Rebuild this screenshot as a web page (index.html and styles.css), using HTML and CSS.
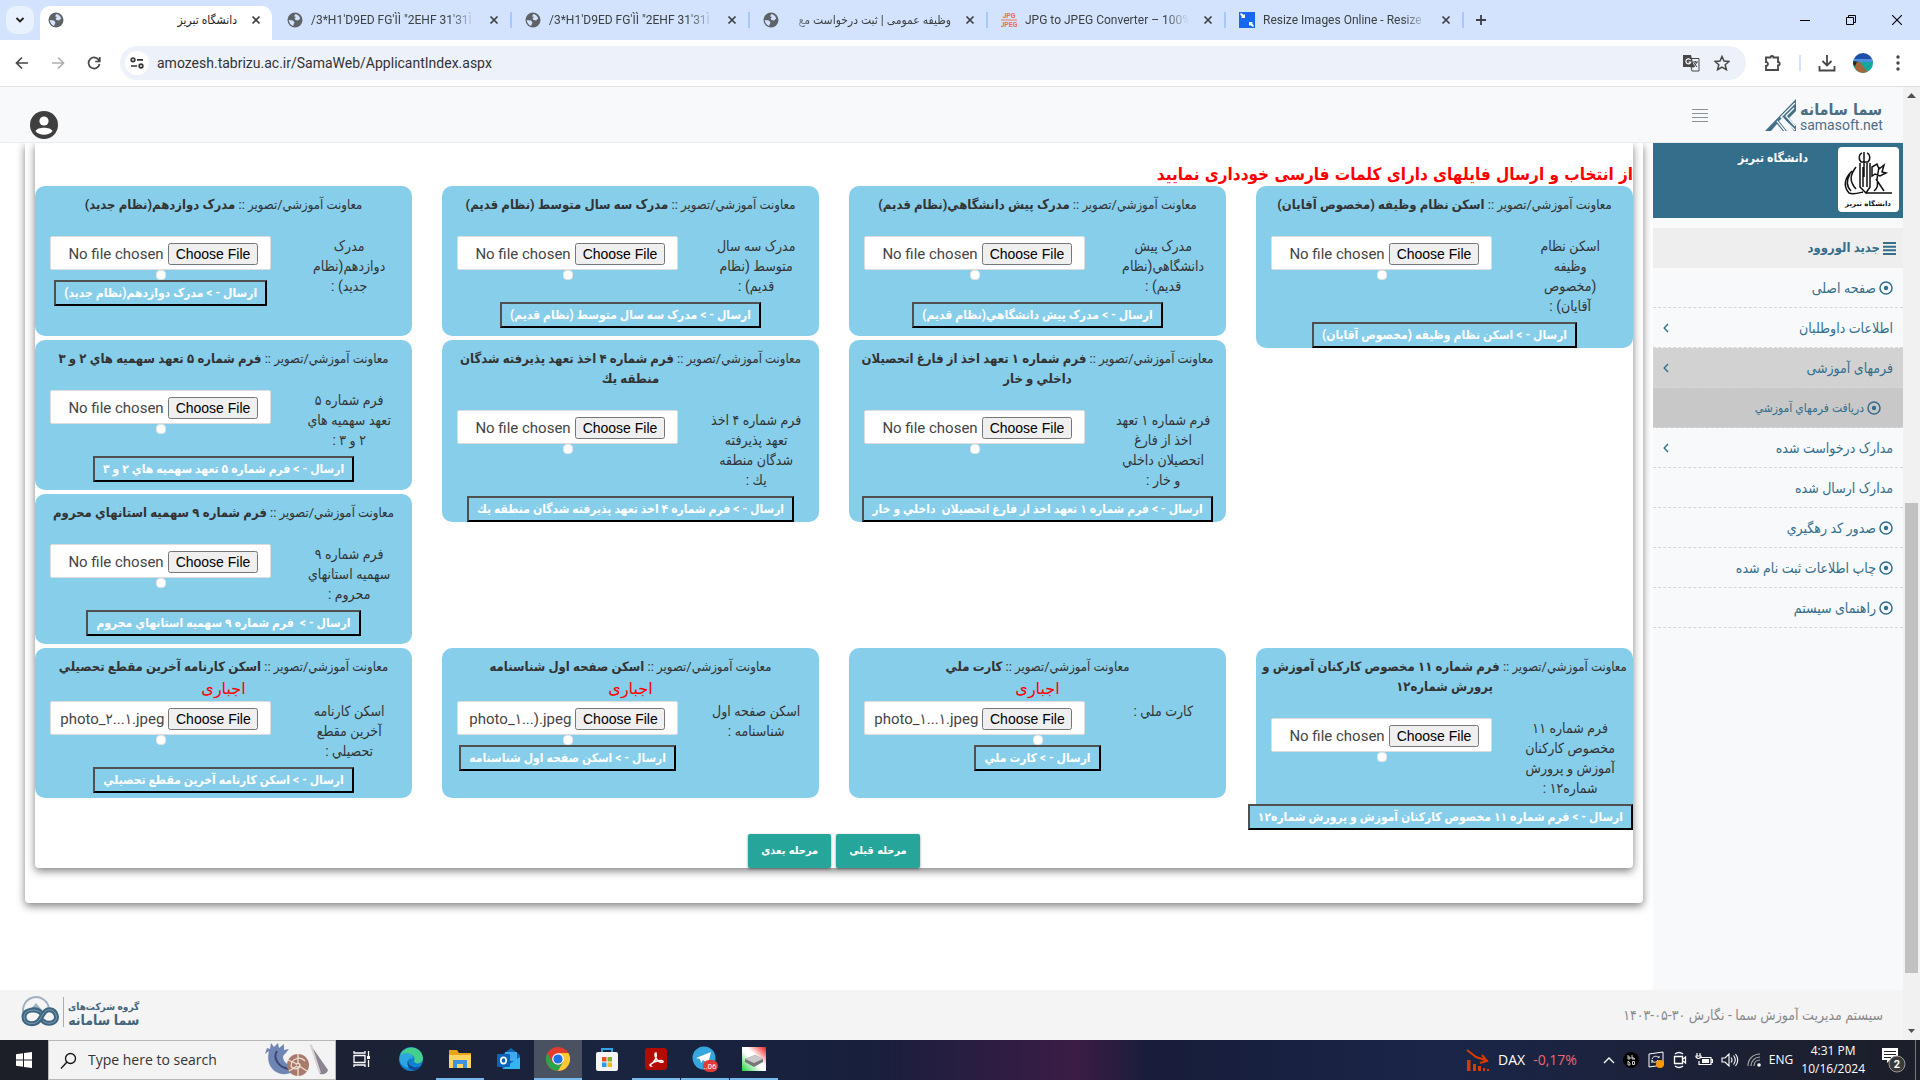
FILE: index.html
```html
<!DOCTYPE html>
<html lang="fa">
<head>
<meta charset="utf-8">
<title>دانشگاه تبریز</title>
<link rel="stylesheet" href="styles.css">
</head>
<body>
<svg width="0" height="0" class="sprite" aria-hidden="true">
  <symbol id="globe" viewBox="0 0 16 16"><circle cx="8" cy="8" r="7.500" fill="#5f6368"/><path d="M8.500 2c2 .6 4 2 4.700 4.500l-2.200 2-2.500-.5-1-1.500 1.500-1.500-2-.8zM1.800 8l4.200.5 1.500 2-1.500 3.500C3.500 13 2 11 1.800 8z" fill="#d3e3fd"/></symbol>
  <symbol id="x" viewBox="0 0 10 10"><path d="M1.500 1.500l7 7M8.500 1.500l-7 7" stroke="#3c4043" stroke-width="1.700"/></symbol>
  <symbol id="dot" viewBox="0 0 14 14"><circle cx="7" cy="7" r="6" fill="none" stroke="#336e8b" stroke-width="1.500"/><circle cx="7" cy="7" r="2.200" fill="#336e8b"/></symbol>
  <symbol id="chev" viewBox="0 0 6 10"><path d="M5 1L1.200 5 5 9" fill="none" stroke="#336e8b" stroke-width="1.400"/></symbol>
</svg>

<header class="tabs">
  <button class="tab-search" aria-label="Search tabs"><svg width="10" height="8" viewBox="0 0 10 8"><path d="M1.500 2L5 5.500 8.500 2" fill="none" stroke="#1f1f1f" stroke-width="1.800"/></svg></button>
  <div class="tab active"><svg class="fav"><use href="#globe"/></svg><span class="tab-text" dir="rtl">دانشگاه تبریز</span><svg class="close"><use href="#x"/></svg></div>
  <div class="tab"><svg class="fav"><use href="#globe"/></svg><span class="tab-text fade">/3*H1'D9ED FG'ÌÌ "2EHF 31'31Ì 3</span><svg class="close"><use href="#x"/></svg></div>
  <div class="tab"><svg class="fav"><use href="#globe"/></svg><span class="tab-text fade">/3*H1'D9ED FG'ÌÌ "2EHF 31'31Ì 3</span><svg class="close"><use href="#x"/></svg></div>
  <div class="tab"><svg class="fav"><use href="#globe"/></svg><span class="tab-text fade fade-rtl" dir="rtl">وظیفه عمومی | ثبت درخواست مع</span><svg class="close"><use href="#x"/></svg></div>
  <div class="tab"><svg class="fav" viewBox="0 0 16 16"><path d="M0 8h16" stroke="#ee7755"/><text x="8" y="6" class="jpg">JPG</text><text x="8" y="15" class="jpg">JPEG</text></svg><span class="tab-text fade">JPG to JPEG Converter – 100% F</span><svg class="close"><use href="#x"/></svg></div>
  <div class="tab"><svg class="fav" viewBox="0 0 16 16"><rect width="16" height="16" fill="#1668f0"/><path d="M6 6V2L5 3 2 1 1 2l2 3-1 1zM10 10v4l1-1 3 2 1-1-2-3 1-1z" fill="#fff"/></svg><span class="tab-text fade">Resize Images Online - Resize JP</span><svg class="close"><use href="#x"/></svg></div>
  <button class="plain new-tab" aria-label="New tab"><svg width="12" height="12" viewBox="0 0 12 12"><path d="M6 1v10M1 6h10" stroke="#3c4043" stroke-width="1.800"/></svg></button>
  <div class="window-controls">
    <button class="plain" aria-label="Minimize"><svg width="10" height="10"><path d="M0 5.500h10" stroke="#000"/></svg></button>
    <button class="plain" aria-label="Restore"><svg width="10" height="10"><path d="M.5 2.500h7v7h-7zM2.500 2.500v-2h7v7h-2" fill="none" stroke="#000"/></svg></button>
    <button class="plain" aria-label="Close"><svg width="10" height="10"><path d="M0 0l10 10M10 0L0 10" stroke="#000" stroke-width="1.100"/></svg></button>
  </div>
</header>

<nav class="toolbar">
  <button class="plain nav" aria-label="Back"><svg width="14" height="14" viewBox="0 0 14 14"><path d="M7 1.500L1.500 7 7 12.500M1.500 7H13" fill="none" stroke="#474747" stroke-width="1.700"/></svg></button>
  <button class="plain nav" aria-label="Forward"><svg width="14" height="14" viewBox="0 0 14 14"><path d="M7 1.500L12.500 7 7 12.500M12.500 7H1" fill="none" stroke="#b0b0b0" stroke-width="1.700"/></svg></button>
  <button class="plain nav" aria-label="Reload"><svg width="14" height="14" viewBox="0 0 14 14"><path d="M12 4.500A5.500 5.500 0 1 0 12.500 8M12.800 1v4.500H8.300" fill="none" stroke="#474747" stroke-width="1.700"/></svg></button>
  <div class="omnibox">
    <span class="tune"><svg width="14" height="12" viewBox="0 0 14 12"><g fill="none" stroke="#333" stroke-width="1.700"><circle cx="3" cy="2.800" r="1.800"/><path d="M7 2.800h6M1 9h6"/><circle cx="11" cy="9" r="1.800"/></g></svg></span>
    <input class="url" type="text" aria-label="Address" value="amozesh.tabrizu.ac.ir/SamaWeb/ApplicantIndex.aspx">
    <svg width="18" height="18" viewBox="0 0 18 18"><path d="M1 1h8l3 12H1z" fill="#474747"/><path d="M8.500 4.500h8.500v12.500H10l-1-4h3zM11 8h5M13.500 7v1.500M12 13l3-5M12 9l3 4" fill="none" stroke="#474747"/><path d="M8.500 6A2.500 2.500 0 1 0 8.800 8H6.500" fill="none" stroke="#fff" stroke-width="1.200"/></svg>
    <svg class="star" width="16" height="16" viewBox="0 0 16 16"><path d="M8 1.500l2 4.600 5 .4-3.800 3.300 1.200 4.900L8 12.100l-4.400 2.600 1.200-4.900L1 6.500l5-.4z" fill="none" stroke="#474747" stroke-width="1.500"/></svg>
  </div>
  <div class="tools">
    <svg width="18" height="18" viewBox="0 0 18 18"><path d="M2 3.500h4.500a1.500 1.500 0 0 1 3 0H14v4.500a1.700 1.700 0 0 1 0 3.400V16H2v-4a2 2 0 0 0 0-4z" fill="none" stroke="#474747" stroke-width="1.800"/></svg>
    <span class="tool-sep"></span>
    <svg width="18" height="18" viewBox="0 0 18 18"><path d="M9 1v10M4.500 7L9 11.500 13.500 7M1.500 12v4.500h15V12" fill="none" stroke="#474747" stroke-width="1.800"/></svg>
    <svg width="20" height="20" viewBox="0 0 20 20"><defs><clipPath id="av"><circle cx="10" cy="10" r="10"/></clipPath></defs><g clip-path="url(#av)"><path fill="#1d4fa8" d="M0 0h20v9H0z"/><path fill="#17a69c" d="M0 9h20v11H0z"/><path fill="#4c8ee0" d="M0 6h20v3H0z"/><path fill="#2c2a22" d="M0 8l7 1-4 5-3-2z"/><path fill="#a3663c" d="M4 9l3 0 8 11H4L2 13z"/></g></svg>
    <svg width="4" height="16" viewBox="0 0 4 16" fill="#474747"><circle cx="2" cy="2" r="1.700"/><circle cx="2" cy="8" r="1.700"/><circle cx="2" cy="14" r="1.700"/></svg>
  </div>
</nav>

<div class="viewport">
<div class="page" dir="rtl">
  <header class="site-header">
    <a class="brand" href="#" dir="ltr">
      <svg width="32" height="32" viewBox="0 0 32 32"><path d="M31 0v12l-7 7 7 8v5h-2L18 18l-4 4 8 10h-4l-6-7-6 7H0z" fill="#43708a"/><path d="M30 4L16 18l14 13M29 9l-8 8 9 10M12 22l8 10" stroke="#f8f9fb" fill="none" stroke-width="1.300"/></svg>
      <span class="brand-text"><b>سما سامانه</b><span>samasoft.net</span></span>
    </a>
    <button class="plain menu" aria-label="منو"><svg width="16" height="14" viewBox="0 0 16 14"><path d="M0 .5h16M0 4.500h16M0 8.500h16M0 12.500h16" stroke="#8a919b"/></svg></button>
    <a class="user" href="#" aria-label="کاربر"><svg width="28" height="28" viewBox="0 0 28 28"><circle cx="14" cy="14" r="14" fill="#3f3f3f"/><circle cx="14" cy="10" r="4.600" fill="#fff"/><path d="M5.500 20c2-4.500 15-4.500 17 0-3.500 5-13.500 5-17 0z" fill="#fff"/></svg></a>
  </header>
  <div class="content">
    <aside class="sidebar">
      <div class="uni">
        <svg class="uni-logo" viewBox="0 0 61 65"><g fill="none" stroke="#111" stroke-width="1.500"><path d="M24 6c-3 1-4 6-1 9h7c3-3 2-8-1-9M26 5v25M22 16v24l6 6 4-6V16M25 20v20M29 16v24M14 24c-8 8-9 15-3 22 4 2 10 0 14-1M12 27c-4 7-4 12 1 17M18 20c-6 8-7 14 0 22M28 46h26M36 44c4-3 4-6 3-12l2-12M38 32l8 12M34 20l5-3 2 5 5-4-2 7 4 1-6 3-5-2-3 2z"/></g><text x="30" y="59" text-anchor="middle" class="logo-text">دانشگاه تبریز</text></svg>
        <b>دانشگاه تبریز</b>
      </div>
      <h2 class="side-title"><svg width="13" height="13" viewBox="0 0 13 13"><path d="M0 1h13M0 4.700h13M0 8.300h13M0 12h13" stroke="#336e8b" stroke-width="2"/></svg>جدید الوروود</h2>
      <nav class="side-nav">
        <a href="#"><svg class="dot-icon"><use href="#dot"/></svg>صفحه اصلی</a>
        <a href="#">اطلاعات داوطلبان<svg class="chev"><use href="#chev"/></svg></a>
        <a href="#" class="open">فرمهای آموزشی<svg class="chev"><use href="#chev"/></svg></a>
        <a href="#" class="sub"><svg class="dot-icon"><use href="#dot"/></svg>دريافت فرمهاي آموزشي</a>
        <a href="#">مدارک درخواست شده<svg class="chev"><use href="#chev"/></svg></a>
        <a href="#">مدارک ارسال شده</a>
        <a href="#"><svg class="dot-icon"><use href="#dot"/></svg>صدور کد رهگيري</a>
        <a href="#"><svg class="dot-icon"><use href="#dot"/></svg>چاپ اطلاعات ثبت نام شده</a>
        <a href="#"><svg class="dot-icon"><use href="#dot"/></svg>راهنمای سیستم</a>
      </nav>
    </aside>
    <main class="main">
      <div class="outer">
        <form class="inner">
          <p class="notice">از انتخاب و ارسال فایلهای دارای کلمات فارسی خودداری نمایید</p>
          <div class="cards">
            <section class="card c1 r1">
              <h3 class="card-title">معاونت آموزشي/تصوير :: <b>اسکن نظام وظيفه (مخصوص آقايان)</b></h3>
              <div class="card-body"><label for="f1">اسکن نظام<br>وظيفه<br>(مخصوص<br>آقايان) :</label><div class="field"><div class="file"><input type="file" id="f1"></div><i class="pip"></i></div></div>
              <button type="button" class="send">ارسال - &gt; اسکن نظام وظيفه (مخصوص آقايان)</button>
            </section>
            <section class="card c2 r1">
              <h3 class="card-title">معاونت آموزشي/تصوير :: <b>مدرک پيش دانشگاهي(نظام قديم)</b></h3>
              <div class="card-body"><label for="f2">مدرک پيش<br>دانشگاهي(نظام<br>قديم) :</label><div class="field"><div class="file"><input type="file" id="f2"></div><i class="pip"></i></div></div>
              <button type="button" class="send">ارسال - &gt; مدرک پيش دانشگاهي(نظام قديم)</button>
            </section>
            <section class="card c3 r1">
              <h3 class="card-title">معاونت آموزشي/تصوير :: <b>مدرک سه سال متوسط (نظام قديم)</b></h3>
              <div class="card-body"><label for="f3">مدرک سه سال<br>متوسط (نظام<br>قديم) :</label><div class="field"><div class="file"><input type="file" id="f3"></div><i class="pip"></i></div></div>
              <button type="button" class="send">ارسال - &gt; مدرک سه سال متوسط (نظام قديم)</button>
            </section>
            <section class="card c4 r1">
              <h3 class="card-title">معاونت آموزشي/تصوير :: <b>مدرک دوازدهم(نظام جديد)</b></h3>
              <div class="card-body"><label for="f4">مدرک<br>دوازدهم(نظام<br>جديد) :</label><div class="field"><div class="file"><input type="file" id="f4"></div><i class="pip"></i><button type="button" class="send">ارسال - &gt; مدرک دوازدهم(نظام جديد)</button></div></div>
            </section>
            <section class="card c2 r2">
              <h3 class="card-title">معاونت آموزشي/تصوير :: <b>فرم شماره ۱ تعهد اخذ از فارغ اتحصيلان<br>داخلي و خار</b></h3>
              <div class="card-body"><label for="f5">فرم شماره ۱ تعهد<br>اخذ از فارغ<br>اتحصيلان داخلي<br>و خار :</label><div class="field"><div class="file"><input type="file" id="f5"></div><i class="pip"></i></div></div>
              <button type="button" class="send">ارسال - &gt; فرم شماره ۱ تعهد اخذ از فارغ اتحصيلان&nbsp; داخلي و خار</button>
            </section>
            <section class="card c3 r2">
              <h3 class="card-title">معاونت آموزشي/تصوير :: <b>فرم شماره ۴ اخذ تعهد پذيرفته شدگان<br>منطقه يك</b></h3>
              <div class="card-body"><label for="f6">فرم شماره ۴ اخذ<br>تعهد پذيرفته<br>شدگان منطقه<br>يك :</label><div class="field"><div class="file"><input type="file" id="f6"></div><i class="pip"></i></div></div>
              <button type="button" class="send">ارسال - &gt; فرم شماره ۴ اخذ تعهد پذيرفته شدگان منطقه يك</button>
            </section>
            <section class="card c4 r2">
              <h3 class="card-title">معاونت آموزشي/تصوير :: <b>فرم شماره ۵ تعهد سهميه هاي ۲ و ۳</b></h3>
              <div class="card-body"><label for="f7">فرم شماره ۵<br>تعهد سهميه هاي<br>۲ و ۳ :</label><div class="field"><div class="file"><input type="file" id="f7"></div><i class="pip"></i></div></div>
              <button type="button" class="send">ارسال - &gt; فرم شماره ۵ تعهد سهميه هاي ۲ و ۳</button>
            </section>
            <section class="card c4 r3">
              <h3 class="card-title">معاونت آموزشي/تصوير :: <b>فرم شماره ۹ سهميه استانهاي محروم</b></h3>
              <div class="card-body"><label for="f8">فرم شماره ۹<br>سهميه استانهاي<br>محروم :</label><div class="field"><div class="file"><input type="file" id="f8"></div><i class="pip"></i></div></div>
              <button type="button" class="send">ارسال - &gt;&nbsp; فرم شماره ۹ سهميه استانهاي محروم</button>
            </section>
            <section class="card c1 r4">
              <h3 class="card-title">معاونت آموزشي/تصوير :: <b>فرم شماره ۱۱ مخصوص کارکنان آموزش و<br>پرورش شماره۱۲</b></h3>
              <div class="card-body"><label for="f9">فرم شماره ۱۱<br>مخصوص کارکنان<br>آموزش و پرورش<br>شماره۱۲ :</label><div class="field"><div class="file"><input type="file" id="f9"></div><i class="pip"></i></div></div>
              <button type="button" class="send wide">ارسال - &gt; فرم شماره ۱۱ مخصوص کارکنان آموزش و پرورش شماره۱۲</button>
            </section>
            <section class="card c2 r4 must">
              <h3 class="card-title">معاونت آموزشي/تصوير :: <b>کارت ملي</b></h3>
              <p class="required">اجباری</p>
              <div class="card-body"><label for="f10">کارت ملي :</label><div class="field"><div class="file chosen"><input type="file" id="f10"><span dir="ltr">photo_۱...۱.jpeg</span></div></div></div>
              <i class="pip"></i>
              <button type="button" class="send">ارسال - &gt; کارت ملي</button>
            </section>
            <section class="card c3 r4 must">
              <h3 class="card-title">معاونت آموزشي/تصوير :: <b>اسکن صفحه اول شناسنامه</b></h3>
              <p class="required">اجباری</p>
              <div class="card-body"><label for="f11">اسکن صفحه اول<br>شناسنامه :</label><div class="field"><div class="file chosen"><input type="file" id="f11"><span dir="ltr">photo_۱...).jpeg</span></div><i class="pip"></i><button type="button" class="send">ارسال - &gt; اسکن صفحه اول شناسنامه</button></div></div>
            </section>
            <section class="card c4 r4 must">
              <h3 class="card-title">معاونت آموزشي/تصوير :: <b>اسکن کارنامه آخرين مقطع تحصيلي</b></h3>
              <p class="required">اجباری</p>
              <div class="card-body"><label for="f12">اسکن کارنامه<br>آخرين مقطع<br>تحصيلي :</label><div class="field"><div class="file chosen"><input type="file" id="f12"><span dir="ltr">photo_۲...۱.jpeg</span></div><i class="pip"></i></div></div>
              <button type="button" class="send">ارسال - &gt; اسکن کارنامه آخرين مقطع تحصيلي</button>
            </section>
          </div>
          <div class="steps"><button type="button" class="step">مرحله قبلی</button><button type="button" class="step">مرحله بعدی</button></div>
        </form>
      </div>
    </main>
  </div>
  <footer class="site-footer">
    <span>سیستم مدیریت آموزش سما - نگارش ۳۰-۰۵-۱۴۰۳</span>
    <div class="group" dir="ltr">
      <svg width="40" height="32" viewBox="0 0 40 32"><path d="M5 21A13 13 0 1 1 29 13" fill="none" stroke="#9fb0bf" stroke-width="2"/><path d="M10 14l6-7 6 7z" fill="#9fb0bf"/><g fill="none" stroke-linecap="round"><path d="M21 17C17 12 4 13 4 21s12 9 16 2 6-10 11-9 7 8 4 11-9 3-12 0" stroke="#3d6580" stroke-width="5"/><path d="M21 17C17 12 4 13 4 21s12 9 16 2 6-10 11-9 7 8 4 11-9 3-12 0" stroke="#7f9db3"/></g></svg>
      <span class="group-text"><b class="small">گروه‌ شرکت‌های</b><b>سما سامانه</b></span>
    </div>
  </footer>
</div>
<div class="scrollbar" aria-hidden="true"><svg class="arrow" viewBox="0 0 17 17"><path d="M4 11l4.500-5 4.500 5z" fill="#505050"/></svg><i class="above"></i><i class="thumb"></i><i class="below"></i><svg class="arrow" viewBox="0 0 17 17"><path d="M5 6l3.500 4L12 6z" fill="#505050"/></svg></div>
</div>

<footer class="taskbar">
  <button class="plain start" aria-label="Start"><svg width="16" height="16" viewBox="0 0 16 16" fill="#fff"><path d="M0 2.200L7 1.200v6.300H0zM8 1l8-1v7.500H8zM0 8.500h7v6.300l-7-1zM8 8.500h8V16l-8-1z"/></svg></button>
  <label class="search"><svg width="17" height="17" viewBox="0 0 17 17"><circle cx="10.500" cy="6.500" r="5" fill="none" stroke="#111" stroke-width="1.300"/><path d="M7 10l-6 6.500" stroke="#111" stroke-width="1.300"/></svg><input type="text" placeholder="Type here to search" aria-label="Search"><svg width="66" height="36" viewBox="0 0 66 36"><path d="M27 31C12 36 1 24 5 9L1 12l2-6 3 1 1-6 3 4 4-4 1 5 5-4 0 6 5-1-4 5c-4 2-2 9 7 13z" fill="#6f86b5"/><path d="M13 9c-4 6 0 16 12 18" stroke="#3a4774" fill="none" stroke-width="2"/><circle cx="34" cy="23" r="11" fill="#a87a6c"/><path d="M34 23m-2 0a2 2 0 1 1 4 1 5 5 0 0 1-9 0 8 8 0 0 1 14-5M34 12v10M24 18l9 4M25 29l8-5M34 34v-10M43 29l-8-5" fill="none" stroke="#f1dfd3" stroke-width="1.300"/><path d="M46 2l18 26c-1 4-5 5-8 4z" fill="#8c8493"/><path d="M47 3l9 28" stroke="#d8cfd2" stroke-width="2"/></svg></label>
  <div class="apps">
    <button class="plain app" aria-label="Task view"><svg width="18" height="16" viewBox="0 0 18 16"><path d="M1 0v2h11V0M1 16v-2h11v2M1 4.500h11v7H1zM15.500 0v5M15.500 9v7" fill="none" stroke="#fff" stroke-width="1.300"/><path d="M14 5h3v3h-3z" fill="#fff"/></svg></button>
    <button class="plain app" aria-label="Edge"><svg width="24" height="24" viewBox="0 0 24 24"><circle cx="12" cy="12" r="12" fill="#1180d2"/><path d="M1 9C4-2 22-3 24 11c0 6-8 7-9 3 3-7-8-9-14-5z" fill="#45cf8d"/><path d="M1 9C6 3 15 7 14 12c-4-3-8 4-3 9C4 21-1 15 1 9z" fill="#2ba8e2"/><path d="M9 13c0 7 8 9 13 6-5 8-16 4-13-6z" fill="#0a4d9b"/></svg></button>
    <button class="plain app run" aria-label="Explorer"><svg width="24" height="20" viewBox="0 0 24 20"><path d="M1 1h8l2 3h12v15H1z" fill="#e9a21b"/><path d="M1 6h22v13H1z" fill="#fcd462"/><path d="M5 19v-8h14v8h-4v-4H9v4z" fill="#3d93de"/></svg></button>
    <button class="plain app" aria-label="Outlook"><svg width="24" height="24" viewBox="0 0 24 24"><path d="M5 8l9-7 9 7v13H5z" fill="#1267b5"/><path d="M8 5h12v9H8z" fill="#3faaf0"/><path d="M5 22l18-12v12z" fill="#32b6f2"/><rect y="7" width="13" height="13" rx="1" fill="#0a64b8"/><ellipse cx="6.500" cy="13.500" rx="2.700" ry="3.200" fill="none" stroke="#fff" stroke-width="1.700"/></svg></button>
    <button class="plain app run on" aria-label="Chrome"><svg width="24" height="24" viewBox="0 0 24 24"><circle cx="12" cy="12" r="12" fill="#e33b2e"/><path d="M1.600 6A12 12 0 0 0 12 24l5-9-5 3-6-3z" fill="#2ba24c"/><path d="M12 24A12 12 0 0 0 22.400 6H12l5 9z" fill="#fcc934"/><circle cx="12" cy="12" r="5.800" fill="#fff"/><circle cx="12" cy="12" r="4.600" fill="#1a73e8"/></svg></button>
    <button class="plain app" aria-label="Store"><svg width="24" height="24" viewBox="0 0 24 24"><path d="M7 6V2h10v4" fill="none" stroke="#2ea5e6" stroke-width="2"/><rect x="1" y="5" width="22" height="19" rx="2" fill="#f5f5f5"/><path fill="#e8502a" d="M7 10h4.500v4.500H7z"/><path fill="#7db52f" d="M12.500 10H17v4.500h-4.500z"/><path fill="#2b9fe0" d="M7 15.500h4.500V20H7z"/><path fill="#f5b61e" d="M12.500 15.500H17V20h-4.500z"/></svg></button>
    <button class="plain app run" aria-label="Acrobat"><svg width="24" height="24" viewBox="0 0 24 24"><rect x="1" y="1" width="22" height="22" rx="3" fill="#b30b00"/><path d="M6 18c6-4 7-8 6-12-3 0 1 11 7 9 1-3-9-1-12 2-1 1-1 2 0 2z" fill="none" stroke="#fff" stroke-width="1.500"/></svg></button>
    <button class="plain app run" aria-label="Telegram"><svg width="26" height="26" viewBox="0 0 26 26"><circle cx="12" cy="12" r="11.500" fill="#35a6de"/><path d="M4 12l15-6-3 12-5-4-2 3-1-4z" fill="#fff"/><rect x="11" y="14" width="15" height="12" rx="6" fill="#e53935"/><text x="18" y="23" class="badge">..06</text></svg></button>
    <button class="plain app run" aria-label="Scanner"><svg width="24" height="24" viewBox="0 0 24 24"><defs><linearGradient id="sg" x1="0" y1="1" x2="1" y2="0"><stop offset="0" stop-color="#1fd03c"/><stop offset=".45" stop-color="#fff"/><stop offset=".6" stop-color="#fff"/><stop offset="1" stop-color="#f01818"/></linearGradient></defs><path fill="url(#sg)" d="M0 0h24v24H0z"/><path d="M3 12l10-4 8 4v3l-9 5-9-5z" fill="#777"/><path d="M3 12l10-4 8 4-9 4z" fill="#c9c9c9"/></svg></button>
  </div>
  <div class="tray">
    <svg width="24" height="24" viewBox="0 0 24 24"><path d="M1 2l9 7 9 3M16 7l5 6-7 2" fill="none" stroke="#d83b01" stroke-width="2"/><path d="M1 12h3.500v11H1zM7 16h3v7H7zM12 18h3v5h-3zM17 20h2v3h-2zM21 21h2v2h-2z" fill="#d83b01"/></svg>
    <span class="dax">DAX</span><span class="down">-0,17%</span>
    <svg class="up" width="12" height="8" viewBox="0 0 12 8"><path d="M1 7l5-5 5 5" fill="none" stroke="#fff" stroke-width="1.400"/></svg>
    <svg width="16" height="16" viewBox="0 0 16 16"><circle cx="8" cy="8" r="8" fill="#000"/><path d="M5 3v4h2V5H5M9 3v4h3L9 5M5 9v4h2v-2zM9.500 9.500h2v3h-2z" fill="none" stroke="#ccc"/></svg>
    <svg width="18" height="18" viewBox="0 0 18 18"><path d="M2 3l14-2v13L2 16z" fill="none" stroke="#fff"/><path d="M5 8c2-4 5-3 7-1V5M11 9c-2 3-5 3-6 0v3" fill="none" stroke="#fff"/><circle cx="13" cy="13" r="4" fill="#ff9800"/></svg>
    <svg width="14" height="18" viewBox="0 0 14 18"><path d="M2 3q4-3 8 0M2 15q4 3 8 0M1.500 5.500h8v7h-8zM10 8l2.500-2v6L10 10" fill="none" stroke="#fff" stroke-width="1.300"/></svg>
    <svg width="18" height="14" viewBox="0 0 18 14"><path d="M5 4.500h11v7H4V8M16 6.500h1.500v3H16M2 0v3M5 0v3M1 3h5v1Q3.500 7 1 4z" fill="none" stroke="#fff" stroke-width="1.200"/><path d="M7 6h7v4H7z" fill="#fff"/></svg>
    <svg width="18" height="14" viewBox="0 0 18 14"><path d="M1 5h3l4-4v12L4 9H1zM10 4.500q2 2.500 0 5M12.500 2.500q3.500 4.500 0 9M14.500 1q4.500 6 0 12" fill="none" stroke="#fff" stroke-width="1.100"/></svg>
    <svg width="14" height="14" viewBox="0 0 14 14"><path d="M1 13C1 6 6 1 13 1M4 13c0-5 4-9 9-9M7 13c0-4 3-6 6-6" fill="none" stroke="#aaa" stroke-width="1.200"/><circle cx="12" cy="12" r="1.800" fill="#fff"/></svg>
    <span>ENG</span>
    <span class="clock">4:31 PM<br>10/16/2024</span>
    <svg width="26" height="26" viewBox="0 0 26 26"><path d="M1 1h16v12H9l-3 3v-3H1z" fill="#fff"/><path d="M3 4.500h12M3 7.500h12M3 10.500h7" stroke="#222"/><circle cx="16" cy="17" r="8" fill="#3a3a3a" stroke="#999"/><text x="16" y="21" class="count">2</text></svg>
    <i class="desk"></i>
  </div>
</footer>
</body>
</html>
```
FILE: styles.css
```css
* { box-sizing: border-box; }
body { margin: 0; min-height: 100vh; display: flex; flex-direction: column; font: 14px/20px Roboto, "DejaVu Sans Condensed", "DejaVu Sans", sans-serif; color: #333; background: #fff; }
h2, h3, p { margin: 0; font-weight: normal; }
a { color: inherit; text-decoration: none; }
svg { flex: none; display: block; }
.sprite { position: absolute; }
.plain { border: 0; padding: 0; background: none; display: flex; align-items: center; justify-content: center; }

/* browser tabs */
.tabs { display: flex; height: 40px; background: #d3e3fd; padding-top: 6px; font: 12px/18px Roboto, "DejaVu Sans Condensed", "DejaVu Sans", sans-serif; }
.tab-search { width: 28px; height: 28px; margin: 0 6px; padding: 0; border: 0; border-radius: 10px; background: #e9f1fe; display: flex; align-items: center; justify-content: center; }
.tab { position: relative; width: 238px; padding: 0 13px 6px; display: flex; align-items: center; gap: 8px; color: #3c4043; }
.tab.active { width: 232px; margin-right: 2px; background: #fff; border-radius: 10px 10px 0 0; padding: 0 11px 6px 8px; color: #1f1f1f; }
.tab:not(.active)::after { content: ""; position: absolute; right: 0; top: 6px; width: 2px; height: 16px; background: #a8c7fa; }
.fav { width: 16px; height: 16px; }
.close { width: 10px; height: 10px; margin-left: 6px; }
.tab-text { flex: 1; min-width: 0; white-space: nowrap; overflow: hidden; }
.fade { -webkit-mask-image: linear-gradient(to left, transparent, #000 24px); mask-image: linear-gradient(to left, transparent, #000 24px); }
.fade-rtl { -webkit-mask-image: linear-gradient(to right, transparent, #000 24px); mask-image: linear-gradient(to right, transparent, #000 24px); }
.jpg { font: bold 7px Roboto, sans-serif; fill: #ee6f4c; text-anchor: middle; }
.new-tab { width: 34px; padding-bottom: 6px; }
.window-controls { margin-left: auto; display: flex; padding-bottom: 6px; }
.window-controls .plain { width: 46px; }

/* toolbar */
.toolbar { display: flex; align-items: center; height: 47px; padding: 0 20px 0 4px; border-bottom: 1px solid #dfe1dc; }
.nav { width: 36px; height: 34px; }
.omnibox { flex: 1; display: flex; align-items: center; height: 34px; margin: 0 18px 0 8px; padding: 0 16px 0 5px; border-radius: 17px; background: #edf1fa; }
.tune { width: 24px; height: 24px; border-radius: 12px; background: #fff; display: flex; align-items: center; justify-content: center; }
.url { flex: 1; margin: 0 8px; padding: 0; border: 0; background: none; color: #333; font: 14px/20px Roboto, sans-serif; }
.star { margin-left: 14px; }
.tools { display: flex; align-items: center; gap: 17px; }
.tools > :last-child { margin-left: 6px; }
.tool-sep { width: 2px; height: 16px; background: #d3e3fd; }

/* page frame */
.viewport { flex: 1; display: flex; }
.page { flex: 1; min-width: 0; display: flex; flex-direction: column; }
.scrollbar { width: 17px; background: #f1f1f1; display: flex; flex-direction: column; }
.arrow { width: 17px; height: 17px; }
.above { flex: 399; }
.thumb { flex: 470; margin: 0 2px; background: #c1c1c1; }
.below { flex: 50; }

.site-header { display: flex; height: 56px; padding: 0 22px 0 30px; background: #f8f9fb; border-bottom: 1px solid #eaecee; }
.brand { display: flex; gap: 3px; margin-top: 12px; height: 32px; color: #4d6f86; }
.brand-text { width: 81px; display: flex; flex-direction: column; padding-top: 3px; font-size: 14px; line-height: 14px; }
.brand b { font: bold 16px/16px "DejaVu Sans Condensed", "DejaVu Sans", sans-serif; white-space: nowrap; }
.menu { height: 14px; margin: 22px 57px 0 0; }
.user { margin: 24px auto 0 0; }

.content { flex: 1; display: flex; }
.sidebar { width: 250px; background: #f8f9fb; color: #336e8b; }
.uni { display: flex; gap: 30px; height: 75px; padding: 4px; background: #336e8b; color: #fff; font-size: 12px; line-height: 22px; }
.uni-logo { width: 61px; height: 65px; background: #fff; border-radius: 4px; }
.logo-text { font: bold 7px "DejaVu Sans", sans-serif; fill: #111; }
.side-title { display: flex; align-items: center; gap: 3px; height: 40px; margin-top: 10px; padding: 0 7px; background: #eee; font-size: 13px; font-weight: bold; }
.side-nav a { display: flex; align-items: center; gap: 3px; height: 40px; padding: 0 10px; border-bottom: 1px dashed #d5d8da; }
.side-nav a.open { background: #d2d2d2; }
.side-nav a.sub { background: #c8c8c8; padding-right: 22px; font-size: 12px; }
.dot-icon { width: 14px; height: 14px; }
.chev { width: 6px; height: 10px; margin-right: auto; }

.main { flex: 1; min-width: 0; overflow: hidden; padding: 0 10px 87px 25px; }
.outer { padding: 0 10px 35px; border-radius: 0 0 4px 4px; box-shadow: 0 3px 8px rgba(0, 0, 0, .5); }
.inner { border-radius: 0 0 4px 4px; box-shadow: 0 3px 8px rgba(0, 0, 0, .5); padding-top: 19px; }
.notice { color: #f00; font: bold 17px/24px "DejaVu Sans Condensed", "DejaVu Sans", sans-serif; white-space: nowrap; }

/* document cards */
.cards { display: grid; grid-template-columns: repeat(4, 1fr); grid-template-rows: repeat(3, minmax(150px, auto)) auto; gap: 4px 30px; }
.card { min-width: 0; min-height: 150px; display: flex; flex-direction: column; align-items: center; align-self: start; padding-top: 9px; border-radius: 10px; background: skyblue; }
.c1 { grid-column: 1; }
.c2 { grid-column: 2; }
.c3 { grid-column: 3; }
.c4 { grid-column: 4; }
.r1 { grid-row: 1; }
.c1.r1 { grid-row: 1 / span 2; }
.r2 { grid-row: 2; }
.c2.r2, .c3.r2 { grid-row: 2 / span 2; }
.r3 { grid-row: 3; }
.r4 { grid-row: 4; }
.card-title { margin-bottom: 21px; font-size: 13px; line-height: 20px; text-align: center; white-space: nowrap; }
.must .card-title { margin-bottom: 0; }
.required { color: #f00; font: 16px/24px "DejaVu Sans", sans-serif; }
.card-body { display: flex; align-self: stretch; align-items: flex-start; }
.card-body label { width: 33.333%; padding-bottom: 6px; text-align: center; font-size: 14px; white-space: nowrap; }
.field { flex: 1; min-width: 0; padding: 0 15px; display: flex; flex-direction: column; align-items: center; }
.file { align-self: stretch; height: 34px; padding: 2px 12px 0; display: flex; align-items: center; gap: 4px; background: #fff; border: 1px solid #ddd; border-radius: 2px; color: #444; font-size: 15px; white-space: nowrap; }
.file input { width: 100%; min-width: 0; height: 22px; color: #444; font: 15px/20px Roboto, sans-serif; }
.file input::file-selector-button { height: 22px; font: 14px/18px "Liberation Sans", sans-serif; }
.file.chosen input { flex: none; width: 90px; font-size: 0; }
.file.chosen input::file-selector-button { width: 90px; margin: 0; padding: 0; }
.pip { width: 10px; height: 10px; border-radius: 4px; background: #fff; border: 1px solid #e4e4e4; }
.send { height: 26px; padding: 0 8px; border: 2px solid; border-color: #505050 #000 #000 #505050; background: skyblue; color: #fff; font: bold 12px/20px Roboto, "DejaVu Sans Condensed", "DejaVu Sans", sans-serif; white-space: nowrap; }
.send.wide { align-self: flex-start; }
.steps { display: flex; justify-content: center; gap: 5px; margin-top: 4px; }
.step { height: 34px; padding: 0 13px; border: 0; border-radius: 2px; background: #26a69a; color: #fff; font: bold 11px/20px "DejaVu Sans Condensed", "DejaVu Sans", sans-serif; box-shadow: 0 1px 3px rgba(0, 0, 0, .4); }

.site-footer { display: flex; align-items: center; justify-content: space-between; height: 50px; padding: 0 20px; background: #f4f4f4; color: #888; }
.group { display: flex; align-items: center; gap: 3px; padding-bottom: 6px; color: #43657b; }
.group-text { display: flex; flex-direction: column; align-items: flex-end; border-left: 1px solid #9fb0bf; padding: 4px 0 0 4px; font-size: 14px; line-height: 14px; }
.group-text .small { font-size: 10px; line-height: 12px; }

/* taskbar */
.taskbar { display: flex; align-items: stretch; height: 40px; background: linear-gradient(to right, #1d1f27, #192440 35%, #171f3d 45%, #3b1c45 56%, #171d3a 60%, #1a2548 75%, #1c1e28); color: #fff; font: 12px/18px "Open Sans", sans-serif; }
.start { width: 48px; }
.search { width: 288px; display: flex; align-items: center; padding: 0 5px 0 11px; background: #f3f3f3; border: 1px solid #b8b8b8; }
.search input { flex: 1; min-width: 0; margin-left: 11px; padding: 0; border: 0; background: none; font: 14px/20px "Open Sans", sans-serif; }
.search input::placeholder { color: #333; opacity: 1; }
.apps { display: flex; gap: 1px; padding-left: 2px; }
.app { width: 48px; border-bottom: 2px solid transparent; }
.app.run { border-bottom-color: #76b9ed; }
.app.on { background: #4a5261; }
.badge { font: 8px Roboto, sans-serif; fill: #fff; text-anchor: middle; }
.tray { margin-left: auto; display: flex; align-items: center; gap: 8px; padding-right: 4px; }
.dax { font-size: 14px; }
.down { font-size: 14px; color: #f4646c; }
.up { margin-left: 18px; }
.clock { text-align: center; margin-right: 8px; }
.count { font: bold 11px Roboto, sans-serif; fill: #fff; text-anchor: middle; }
.desk { width: 1px; align-self: stretch; background: #777; }
```
